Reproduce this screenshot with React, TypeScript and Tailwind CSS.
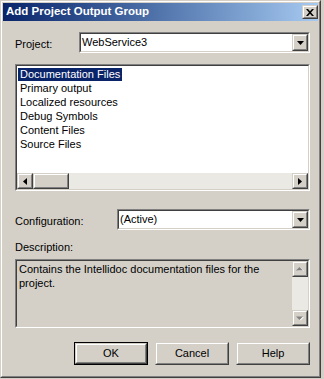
import React from "react";

const rOut = "border border-t-[#d4d0c8] border-l-[#d4d0c8] border-r-[#404040] border-b-[#404040]";
const rIn = "border border-t-white border-l-white border-r-[#808080] border-b-[#808080]";
const sOut = "border border-t-[#808080] border-l-[#808080] border-r-white border-b-white";
const sIn = "border border-t-[#404040] border-l-[#404040] border-r-[#d4d0c8] border-b-[#d4d0c8]";

function Raised({ className, children }: { className: string; children?: React.ReactNode }) {
  return (
    <div className={`${rOut} ${className}`}>
      <div className={`${rIn} w-full h-full flex items-center justify-center bg-[#d4d0c8]`}>{children}</div>
    </div>
  );
}

function DownArrow({ color = "#000" }: { color?: string }) {
  return (
    <svg width="7" height="4" viewBox="0 0 7 4">
      <path d="M0 0h7L3.5 4z" fill={color} />
    </svg>
  );
}

function Combo({ value, width }: { value: string; width: string }) {
  return (
    <div className={`${sOut} ${width} h-[21px]`}>
      <div className={`${sIn} w-full h-full bg-white flex items-center`}>
        <span className="flex-1 pl-[1px] text-[11px] leading-none text-black">{value}</span>
        <Raised className="w-[16px] h-[17px]">
          <DownArrow />
        </Raised>
      </div>
    </div>
  );
}

const items = [
  "Documentation Files",
  "Primary output",
  "Localized resources",
  "Debug Symbols",
  "Content Files",
  "Source Files",
];

export default function App() {
  return (
    <div
      className="w-[324px] h-[379px] bg-[#d4d0c8] text-black"
      style={{ fontFamily: '"Liberation Sans", Arial, sans-serif' }}
    >
      <div className={`w-[321px] h-[378px] ${rOut}`}>
        <div className={`w-full h-full p-[1px] ${rIn} bg-[#d4d0c8] flex flex-col`}>
          {/* Title bar */}
          <div className="h-[18px] flex items-center bg-linear-to-r from-[#0a246a] to-[#a6caf0] pl-[3px]">
            <span className="flex-1 text-white font-bold text-[11.5px] leading-none">Add Project Output Group</span>
            <Raised className="w-[16px] h-[14px]">
              <svg width="8" height="7" viewBox="0 0 8 7">
                <path d="M0 0h2l2 2.2L6 0h2L5 3.5 8 7H6L4 4.8 2 7H0l3-3.5z" fill="#000" />
              </svg>
            </Raised>
          </div>

          <div className="pl-[12px] flex flex-col w-[307px]">
            {/* Project row */}
            <div className="mt-[11px] flex items-center h-[21px]">
              <span className="w-[64px] text-[11px] leading-none pt-[3px]">Project:</span>
              <Combo value="WebService3" width="w-[231px]" />
            </div>

            {/* List box */}
            <div className={`mt-[11px] h-[127px] ${sOut}`}>
              <div className={`w-full h-full ${sIn} bg-white flex flex-col`}>
                <div className="flex-1 pt-[1px] pl-[1px]">
                  {items.map((it, i) => (
                    <div key={it} className="h-[14px] flex items-center">
                      <span
                        className={`h-[13px] px-[2px] text-[11px] leading-[13px] ${
                          i === 0 ? "bg-[#0a246a] text-white" : "text-black"
                        }`}
                      >
                        {it}
                      </span>
                    </div>
                  ))}
                </div>
                <div className="h-[16px] flex bg-[#ebe9e4]">
                  <Raised className="w-[16px] h-[16px]">
                    <svg width="4" height="7" viewBox="0 0 4 7">
                      <path d="M4 0v7L0 3.5z" fill="#000" />
                    </svg>
                  </Raised>
                  <Raised className="w-[36px] h-[16px]" />
                  <div className="flex-1" />
                  <Raised className="w-[16px] h-[16px]">
                    <svg width="4" height="7" viewBox="0 0 4 7">
                      <path d="M0 0v7L4 3.5z" fill="#000" />
                    </svg>
                  </Raised>
                </div>
              </div>
            </div>

            {/* Configuration row */}
            <div className="mt-[18px] flex items-center h-[21px]">
              <span className="w-[102px] text-[11px] leading-none pt-[3px]">Configuration:</span>
              <Combo value="(Active)" width="w-[193px]" />
            </div>

            <div className="mt-[11px] h-[13px] text-[11px] leading-[13px]">Description:</div>

            {/* Description box */}
            <div className={`mt-[5px] h-[69px] ${sOut}`}>
              <div className={`w-full h-full ${sIn} bg-[#d4d0c8] flex`}>
                <div className="flex-1 pl-[2px] pt-[1px] text-[11px] leading-[14px]">
                  Contains the Intellidoc documentation files for the project.
                </div>
                <div className="w-[16px] flex flex-col bg-[#ebe9e4]">
                  <Raised className="w-[16px] h-[16px]">
                    <svg width="8" height="5" viewBox="0 0 8 5">
                      <path d="M1 4h7L4.5 0.5z" fill="#fff" />
                      <path d="M0 3.5h7L3.5 0z" fill="#808080" />
                    </svg>
                  </Raised>
                  <div className="flex-1" />
                  <Raised className="w-[16px] h-[16px]">
                    <svg width="8" height="5" viewBox="0 0 8 5">
                      <path d="M1 1h7L4.5 4.5z" fill="#fff" />
                      <path d="M0 0.5h7L3.5 4z" fill="#808080" />
                    </svg>
                  </Raised>
                </div>
              </div>
            </div>

            {/* Buttons */}
            <div className="mt-[14px] flex justify-end gap-[7px]">
              <div className="w-[74px] h-[23px] border border-black">
                <Raised className="w-full h-full">
                  <span className="text-[11px] leading-none">OK</span>
                </Raised>
              </div>
              <Raised className="w-[74px] h-[23px]">
                <span className="text-[11px] leading-none">Cancel</span>
              </Raised>
              <Raised className="w-[74px] h-[23px]">
                <span className="text-[11px] leading-none">Help</span>
              </Raised>
            </div>
          </div>
        </div>
      </div>
    </div>
  );
}
